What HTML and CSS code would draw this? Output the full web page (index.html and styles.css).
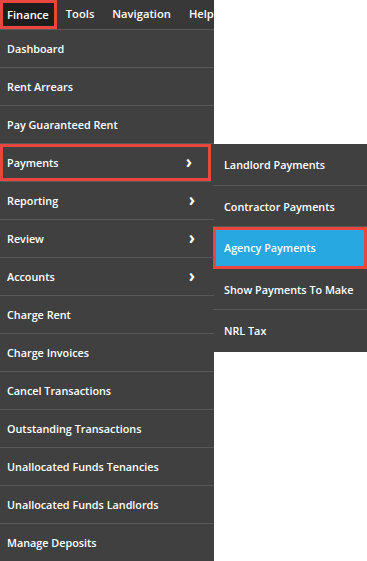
FILE: index.html
```html
<!DOCTYPE html>
<html lang="en">

<head>
    <meta charset="UTF-8">
    <title>Finance menu</title>
    <link rel="stylesheet" href="styles.css">
</head>

<body>
    <div class="nav">
        <div class="topbar">
            <span class="top active">Finance</span>
            <span class="top">Tools</span>
            <span class="top">Navigation</span>
            <span class="top">Help</span>
        </div>
        <ul class="menu">
            <li>Dashboard</li>
            <li>Rent Arrears</li>
            <li>Pay Guaranteed Rent</li>
            <li class="sub open">Payments <span class="arrow">&#8250;</span>
                <ul class="flyout">
                    <li>Landlord Payments</li>
                    <li>Contractor Payments</li>
                    <li class="picked">Agency Payments</li>
                    <li>Show Payments To Make</li>
                    <li>NRL Tax</li>
                </ul>
            </li>
            <li class="sub">Reporting <span class="arrow">&#8250;</span></li>
            <li class="sub">Review <span class="arrow">&#8250;</span></li>
            <li class="sub">Accounts <span class="arrow">&#8250;</span></li>
            <li>Charge Rent</li>
            <li>Charge Invoices</li>
            <li>Cancel Transactions</li>
            <li>Outstanding Transactions</li>
            <li>Unallocated Funds Tenancies</li>
            <li>Unallocated Funds Landlords</li>
            <li>Manage Deposits</li>
        </ul>
    </div>
</body>

</html>
```

FILE: styles.css
```css
* {
    margin: 0;
    padding: 0;
    box-sizing: border-box;
}

body {
    background: #fff;
    font-family: "Open Sans", "Liberation Sans", sans-serif;
    font-size: 10.8px;
    font-weight: 600;
    color: #fff;
}

.nav {
    width: 214px;
    background: #404040;
}

.topbar {
    display: flex;
    height: 30px;
    background: #383838;
    border-bottom: 1px solid #595959;
    overflow: hidden;
    white-space: nowrap;
}

.top {
    padding: 0 9px 0 9px;
    line-height: 28px;
    font-size: 11.2px;
}

.top.active {
    padding: 0 5px 0 4px;
    background: #1e1e1e;
    border: 3px solid #e8463f;
    line-height: 24px;
}

.menu {
    list-style: none;
}

.menu li {
    position: relative;
    height: 38px;
    line-height: 38px;
    padding-left: 7px;
    border-bottom: 1px solid #575757;
}

.menu .arrow {
    position: absolute;
    right: 19px;
    top: 0;
    font-size: 17px;
    font-weight: 700;
    line-height: 36px;
}

.menu .open {
    box-shadow: inset 0 0 0 3px #e8463f;
    margin-right: 3px;
}

.flyout {
    position: absolute;
    left: 213px;
    top: 0;
    width: 154px;
    list-style: none;
    background: #404040;
}

.flyout li {
    height: 41.5px;
    line-height: 41px;
    padding-left: 11px;
    border-bottom: 1px solid #575757;
}

.flyout li:last-child {
    border-bottom: none;
}

.flyout .picked {
    background: #27a8e0;
    box-shadow: inset 0 0 0 3px #e8463f;
    border-bottom: none;
}
```
